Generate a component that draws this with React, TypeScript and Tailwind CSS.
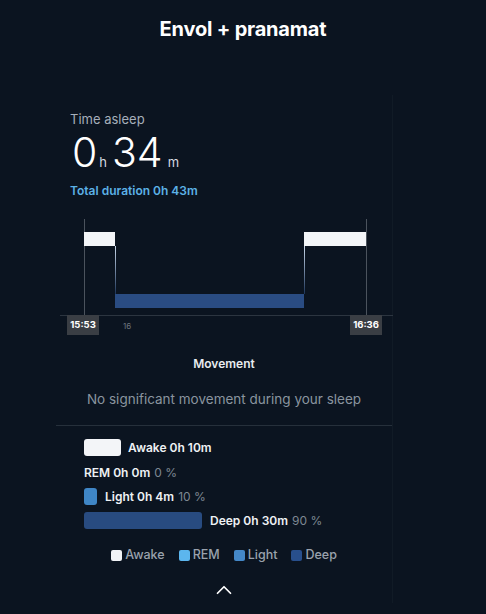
import { ChevronUp } from "lucide-react";

const font = { fontFamily: "Inter, 'Noto Sans', sans-serif" };

function SleepChart() {
  return (
    <div className="relative h-[116px] w-[337px]">
      <svg width="337" height="100" className="absolute left-0 top-0">
        <defs>
          <linearGradient id="drop" x1="0" y1="0" x2="0" y2="1">
            <stop offset="0" stopColor="#c9d8ea" />
            <stop offset="1" stopColor="#1d3558" />
          </linearGradient>
        </defs>
        <line x1="28.5" y1="0" x2="28.5" y2="100" stroke="#4b535d" />
        <line x1="310.5" y1="0" x2="310.5" y2="100" stroke="#4b535d" />
        <line x1="4" y1="96.5" x2="337" y2="96.5" stroke="#2c3540" />
        <rect x="28" y="13" width="31" height="14" fill="#f3f5f8" />
        <rect x="248" y="13" width="62" height="14" fill="#f3f5f8" />
        <rect x="59" y="27" width="1" height="48" fill="url(#drop)" />
        <rect x="248" y="27" width="1" height="48" fill="url(#drop)" />
        <rect x="59" y="75" width="189" height="14" fill="#2a4c82" />
      </svg>
      <div className="absolute left-[11px] top-[96px] flex h-[20px] w-[32px] items-center justify-center bg-[#3a3e44] text-[9.5px] font-bold text-white">
        15:53
      </div>
      <div className="absolute left-[67px] top-[101px] text-[8px] text-[#6b737d]">16</div>
      <div className="absolute left-[294px] top-[96px] flex h-[20px] w-[32px] items-center justify-center bg-[#3a3e44] text-[9.5px] font-bold text-white">
        16:36
      </div>
    </div>
  );
}

function Legend() {
  const items = [
    { label: "Awake", color: "bg-[#f1f3f6]" },
    { label: "REM", color: "bg-[#5cb6ee]" },
    { label: "Light", color: "bg-[#4488c8]" },
    { label: "Deep", color: "bg-[#284f8c]" },
  ];
  return (
    <div className="flex items-center justify-center gap-[14px] text-[12.5px] font-medium text-[#9aa2ad]">
      {items.map((it) => (
        <div key={it.label} className="flex items-center gap-[3px]">
          <span className={`h-[11px] w-[11px] rounded-[2px] ${it.color}`} />
          <span>{it.label}</span>
        </div>
      ))}
    </div>
  );
}

export default function App() {
  return (
    <div className="h-[614px] w-[486px] overflow-hidden bg-[#0b1420] text-white" style={font}>
      <h1 className="pt-[15px] text-center text-[20px] font-bold leading-[28px] tracking-[-0.2px]">
        Envol + pranamat
      </h1>

      <div className="ml-[56px] mt-[52px] w-[337px] border-r border-[#111b26] pt-[16px]">
        <div className="pl-[14px]">
          <p className="text-[13px] leading-[16px] text-[#a6afba]">Time asleep</p>
          <div className="mt-[3px] flex items-baseline font-light leading-[44px]">
            <span className="pl-[2px] text-[41px]">0</span>
            <span className="ml-[2px] mr-[5px] text-[13px] font-normal text-[#d5dae0]">h</span>
            <span className="text-[41px]">34</span>
            <span className="ml-[5px] text-[13px] font-normal text-[#d5dae0]">m</span>
          </div>
          <p className="-mt-[1px] text-[12px] font-semibold leading-[16px] text-[#5cb1e6]">
            Total duration 0h 43m
          </p>
        </div>

        <div className="mt-[20px]">
          <SleepChart />
        </div>

        <p className="mt-[21px] text-center text-[12px] font-semibold leading-[16px] text-[#e8ecf0]">
          Movement
        </p>
        <p className="mt-[18px] text-center text-[13.5px] leading-[18px] text-[#8a949f]">
          No significant movement during your sleep
        </p>
        <div className="mt-[17px] h-px bg-[#26303b]" />

        <div className="flex flex-col pl-[28px] pt-[13px] text-[12px] font-semibold text-[#eef1f4]">
          <div className="flex h-[17px] items-center gap-[7px]">
            <span className="h-[17px] w-[37px] rounded-[3px] bg-[#f3f5f8]" />
            <span>Awake 0h 10m</span>
          </div>
          <div className="mt-[8px] flex h-[17px] items-center">
            <span>REM 0h 0m</span>
            <span className="ml-[4px] font-normal text-[#7e8893]">0 %</span>
          </div>
          <div className="mt-[7px] flex h-[17px] items-center gap-[8px]">
            <span className="h-[17px] w-[13px] rounded-[3px] bg-[#3f86c6]" />
            <span>Light 0h 4m</span>
            <span className="-ml-[4px] font-normal text-[#7e8893]">10 %</span>
          </div>
          <div className="mt-[7px] flex h-[17px] items-center gap-[8px]">
            <span className="h-[17px] w-[118px] rounded-[3px] bg-[#284b80]" />
            <span>Deep 0h 30m</span>
            <span className="-ml-[4px] font-normal text-[#7e8893]">90 %</span>
          </div>
        </div>

        <div className="mt-[17px]">
          <Legend />
        </div>

        <div className="mt-[12px] flex justify-center">
          <ChevronUp className="h-[26px] w-[26px] text-white" strokeWidth={1.6} />
        </div>
      </div>
    </div>
  );
}
